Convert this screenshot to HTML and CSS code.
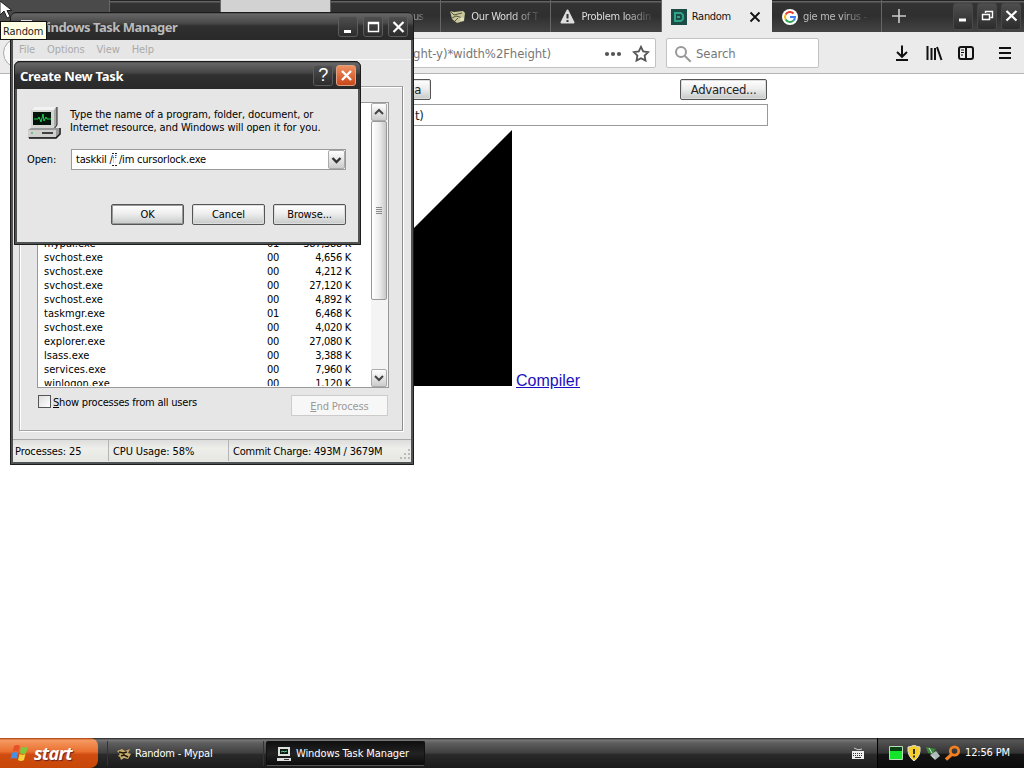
FILE: index.html
```html
<!DOCTYPE html>
<html lang="en">
<head>
    <meta charset="UTF-8">
    <meta name="viewport" content="width=device-width, initial-scale=1.0">
    <title>Random - Mypal</title>
    <link rel="stylesheet" href="styles.css">
</head>
<body>

    <!-- browser -->
    <div class="browser">
        <div class="tabs">
            <div class="tab first"></div>
            <div class="tab"></div>
            <div class="tab light"></div>
            <div class="tab fade right"><span>us</span></div>
            <div class="tab fade">
                <svg width="18" height="18" viewBox="0 0 18 18"><path d="M1 3l4 1 9-1 2 2-1 8-7 2-5-4z" fill="#c9c79a"/><path d="M1 3l4 4 8-2M3 10l4-2 7 2M6 13l3-3" stroke="#55553c" fill="none"/><circle cx="13" cy="11" r="2" fill="#e4e2b8"/></svg>
                <span>Our World of T</span>
            </div>
            <div class="tab fade">
                <svg width="18" height="18" viewBox="0 0 18 18"><path d="M8.5 2.5l6 12h-12z" fill="#ddd" stroke="#ddd" stroke-width="2" stroke-linejoin="round"/><path d="M8.500 6v4.500M8.500 12v2" stroke="#333" stroke-width="2"/></svg>
                <span>Problem loadin</span>
            </div>
            <div class="tab active">
                <svg width="18" height="18" viewBox="0 0 18 18"><rect x="1" y="1" width="16" height="16" fill="#1c4a44"/><path d="M5 5h6l2 2v4l-2 2H5z" fill="none" stroke="#2fa187" stroke-width="2"/><path d="M7 8h3v2H7z" fill="#2fa187"/></svg>
                <span>Random</span>
                <svg class="close" width="12" height="12" viewBox="0 0 12 12"><path d="M1.500 1.500l9 9M10.500 1.500l-9 9" stroke="#111" stroke-width="1.800"/></svg>
            </div>
            <div class="tab fade google">
                <svg width="18" height="18" viewBox="0 0 18 18"><circle cx="9" cy="9" r="8" fill="#fff"/><g fill="none" stroke-width="2"><path d="M12.500 5.500A5 5 0 0 0 4.700 6.500" stroke="#e33b2e"/><path d="M4.700 6.500a5 5 0 0 0 0 5" stroke="#f5b912"/><path d="M4.700 11.500a5 5 0 0 0 7.500 1.300" stroke="#2fa44f"/><path d="M12.200 12.800A5 5 0 0 0 14 9H9" stroke="#4080ee"/></g></svg>
                <span>gie me virus -</span>
            </div>
            <div class="plus"><svg width="14" height="14" viewBox="0 0 14 14"><path d="M7 0v14M0 7h14" stroke="#ccc" stroke-width="1.600"/></svg></div>
            <div class="win-buttons">
                <b><svg width="19" height="25"><path d="M5 16h7" stroke="#fff" stroke-width="3"/></svg></b>
                <b><svg width="19" height="25"><path d="M7.500 9V7.500h7v6h-2M4.500 10.500h7v5h-7zM4 10.500h8" stroke="#fff" stroke-width="1.400" fill="none"/></svg></b>
                <b><svg width="19" height="25"><path d="M4.500 7l10 9.500M14.500 7l-10 9.500" stroke="#fff" stroke-width="2.200"/></svg></b>
            </div>
        </div>

        <div class="toolbar">
            <div class="back"></div>
            <div class="url">
                <span>ght-y)*width%2Fheight)</span>
                <svg class="dots" width="18" height="6" viewBox="0 0 18 6"><circle cx="3" cy="3" r="2.100"/><circle cx="9" cy="3" r="2.100"/><circle cx="15" cy="3" r="2.100"/></svg>
                <svg class="star" width="18" height="18" viewBox="0 0 18 18"><path d="M9 1.800l2.200 4.600 5 .7-3.600 3.500.9 5L9 13.200l-4.500 2.400.9-5L1.800 7.100l5-.7z"/></svg>
            </div>
            <div class="search">
                <svg width="18" height="18" viewBox="0 0 18 18"><circle cx="7" cy="7" r="5" /><path d="M10.700 10.700l6 6"/></svg>
                <span>Search</span>
            </div>
            <div class="tools">
                <svg width="18" height="18" viewBox="0 0 18 18"><path d="M9 1.500v11M4 8l5 4.800L14 8M3 16h12"/></svg>
                <svg width="18" height="18" viewBox="0 0 18 18"><path d="M2.500 2v14M6.500 4v12M10 4v12M12 3l4.500 13"/></svg>
                <svg width="18" height="18" viewBox="0 0 18 18"><rect x="2" y="3" width="14" height="12" rx="2"/><path d="M9 3v12" /><path d="M4 6h3M4 8.500h3M4 11h2" stroke-width="1"/></svg>
                <svg class="menu-icon" width="18" height="18" viewBox="0 0 18 18"><path d="M3 4h12M3 9h12M3 14h12"/></svg>
            </div>
        </div>

        <div class="page">
            <div class="buttons">
                <button class="short">a</button>
                <button class="advanced">Advanced...</button>
            </div>
            <div class="formula"><span>t)</span></div>
            <div class="output">
                <svg width="256" height="256"><path d="M256 0v256H0z"/></svg>
                <a href="#">Compiler</a>
            </div>
        </div>
    </div>

    <!-- task manager -->
    <div class="window manager">
        <div class="title">
            <svg width="16" height="16" viewBox="0 0 16 16"><path d="M3 1h11v9H3zM1 12h14v3H1z" fill="#ddd"/></svg>
            <span>Windows Task Manager</span>
            <div class="win-buttons">
                <b><svg width="19" height="20"><path d="M5 14.500h7" stroke="#fff" stroke-width="3"/></svg></b>
                <b><svg width="19" height="20"><path d="M4.500 5.500h10v9h-10zM4 6.500h11" stroke="#fff" stroke-width="1.400" fill="none"/></svg></b>
                <b><svg width="19" height="20"><path d="M4.500 5l10 10M14.500 5l-10 10" stroke="#fff" stroke-width="2.200"/></svg></b>
            </div>
        </div>
        <div class="menu"><span>File</span><span>Options</span><span>View</span><span>Help</span></div>
        <div class="panel">
            <div class="list">
                <div class="rows">
                    <table>
                        <tr><td>mypal.exe</td><td>01</td><td>387,388 K</td></tr>
                        <tr><td>svchost.exe</td><td>00</td><td>4,656 K</td></tr>
                        <tr><td>svchost.exe</td><td>00</td><td>4,212 K</td></tr>
                        <tr><td>svchost.exe</td><td>00</td><td>27,120 K</td></tr>
                        <tr><td>svchost.exe</td><td>00</td><td>4,892 K</td></tr>
                        <tr><td>taskmgr.exe</td><td>01</td><td>6,468 K</td></tr>
                        <tr><td>svchost.exe</td><td>00</td><td>4,020 K</td></tr>
                        <tr><td>explorer.exe</td><td>00</td><td>27,080 K</td></tr>
                        <tr><td>lsass.exe</td><td>00</td><td>3,388 K</td></tr>
                        <tr><td>services.exe</td><td>00</td><td>7,960 K</td></tr>
                        <tr><td>winlogon.exe</td><td>00</td><td>1,120 K</td></tr>
                    </table>
                </div>
                <div class="scroll">
                    <i class="arrow"><svg width="14" height="16"><path d="M3 10l4-4 4 4"/></svg></i>
                    <i class="thumb"></i>
                    <i class="arrow down"><svg width="14" height="16"><path d="M3 6l4 4 4-4"/></svg></i>
                </div>
            </div>
            <div class="below">
                <label><i class="box"></i><span><u>S</u>how processes from all users</span></label>
                <div class="end"><u>E</u>nd Process</div>
            </div>
        </div>
        <div class="status">
            <span>Processes: 25</span><span>CPU Usage: 58%</span><span>Commit Charge: 493M / 3679M</span>
            <svg width="12" height="12" viewBox="0 0 12 12"><path d="M9 1h2M5 5h2M9 5h2M1 9h2M5 9h2M9 9h2" stroke="#bbb" stroke-width="2"/></svg>
        </div>
    </div>

    <!-- run dialog -->
    <div class="window dialog">
        <div class="title">
            <span>Create New Task</span>
            <div class="win-buttons">
                <b>?</b>
                <b class="orange"><svg width="19" height="19"><path d="M5 5l9 9M14 5l-9 9" stroke="#fff" stroke-width="2.400"/></svg></b>
            </div>
        </div>
        <div class="content">
            <div class="info">
                <svg width="34" height="34" viewBox="0 0 34 34">
                    <path d="M4 4l3-3h23v18l-3 4H4z" fill="#aaa"/>
                    <path d="M30 1v18l-3 4H4" fill="none" stroke="#222"/>
                    <path d="M4 4l3-3h22l-2 3z" fill="#f2f2f2"/>
                    <path d="M4 4h23v18H4z" fill="#d4d4d0"/>
                    <path d="M6 6h18v13H6z" fill="#03150a"/>
                    <path d="M7 13h4l1-2 2 5 2-8 1 7 2-4 1 2h4" stroke="#20d050" fill="none"/>
                    <path d="M1 24l3-2h28v6l-3 4H1z" fill="#999"/>
                    <path d="M1 24h28v7H1z" fill="#cfd0cd"/>
                    <path d="M15 27h11M2 32h27l4-4v-6" stroke="#111" stroke-width="1.500" fill="none"/><path d="M4 27h2" stroke="#2a5"/>
                </svg>
                <p><span>Type the name of a program, folder, document, or</span><br><span>Internet resource, and Windows will open it for you.</span></p>
            </div>
            <div class="open">
                <span>Open:</span>
                <div class="combo">
                    <span>taskkil /f /im cursorlock.exe</span>
                    <i><svg width="15" height="18"><path d="M3.500 7l4 4 4-4" stroke="#333" stroke-width="2.400" fill="none"/></svg></i>
                    <svg class="ibeam" width="7" height="16" viewBox="0 0 7 16"><path d="M3.500 3v10" stroke="#fff" stroke-width="1.200"/><path d="M1 2.500h2M4 2.500h2M1 14.500h2M4 14.500h2" stroke="#222"/></svg>
                </div>
            </div>
            <div class="actions">
                <button class="default">OK</button>
                <button>Cancel</button>
                <button>Browse...</button>
            </div>
        </div>
    </div>

    <!-- tooltip and cursor -->
    <div class="tooltip">Random</div>
    <svg class="cursor" width="13" height="20" viewBox="0 0 13 20"><path d="M0 0v14l4-4 3 7 3-1.500-3-6h5z" fill="#fff" stroke="#222"/></svg>

    <!-- taskbar -->
    <div class="taskbar">
        <div class="start">
            <svg width="20" height="20" viewBox="0 0 20 20"><path d="M4 3q3-2 6 0L8.500 9q-3-2-6 0z" fill="#e8502a"/><path d="M11 3.500q3 2 7 0L16 10q-3 2-6 0z" fill="#7ec83e"/><path d="M2 10q3-2 6 0l-1.500 6q-3-2-6 0z" fill="#4b8fe0"/><path d="M9.500 10.800q3 2 6 0L14 17q-3 2-6 0z" fill="#f8cf3a"/></svg>
            <span>start</span>
        </div>
        <div class="task">
            <svg width="16" height="16" viewBox="0 0 16 16"><path d="M1 5l5-2 3 2 5-2-2 4 3 1-3 5-4-1-3 2-1-3-2-1 2-2z" fill="#c8ac6c"/><path d="M3 6l4 1 4-1M5 10l3-1 4 2M8 7v3" stroke="#221a0e" stroke-width="1.500" fill="none"/></svg>
            <span>Random - Mypal</span>
        </div>
        <div class="task pressed">
            <svg width="16" height="16" viewBox="0 0 16 16"><path d="M2 1h12v9H2zM1 12h14v3H1z" fill="#dde0dc"/><path d="M4 3h8v5H4z" fill="#0a1a10"/><path d="M5 6l2-1 1 1 3-1" stroke="#6c9" fill="none"/><path d="M8 13.500h5" stroke="#333"/></svg>
            <span>Windows Task Manager</span>
        </div>
        <div class="keyboard"><svg width="14" height="14" viewBox="0 0 14 14"><path d="M3 1q4 3 8 1" stroke="#ccc" fill="none"/><path d="M1 4h12v8H1z" fill="#eee"/><path d="M2 6.500h10M2 8.500h10" stroke="#333" stroke-dasharray="1 1"/><path d="M4 10.500h6" stroke="#333"/></svg></div>
        <div class="tray">
            <svg width="14" height="14" viewBox="0 0 14 14"><path d="M1 1h12v12H1z" fill="#14e52a"/><path d="M1 1h12v4H1z" fill="#0a4214"/><path d="M.5 .5h13v13H.5z" fill="none" stroke="#b9e0b9"/></svg>
            <svg width="14" height="16" viewBox="0 0 14 16"><path d="M7 0q3 2 6 2 1 9-6 14Q0 11 1 2q3 0 6-2z" fill="#f6cf2a" stroke="#ddd"/><path d="M7 4v5M7 10.500v2" stroke="#222" stroke-width="1.800"/></svg>
            <svg width="16" height="16" viewBox="0 0 16 16"><path d="M1 2l10 2-4 5-4-1z" fill="#3a8a3a"/><path d="M5 10l6-4 4 5-5 4z" fill="#aebbb8"/><path d="M7 11l3 2M4 3l3 5" stroke="#dde" fill="none"/></svg>
            <svg width="16" height="16" viewBox="0 0 16 16"><circle cx="9.500" cy="6" r="4.200" fill="none" stroke="#f08020" stroke-width="2.800"/><path d="M6.500 9.500L1 14.500" stroke="#f08020" stroke-width="3.200"/></svg>
            <span>12:56 PM</span>
        </div>
    </div>

</body>
</html>
```

FILE: styles.css
```css
* {
    box-sizing: border-box;
}

body {
    margin: 0;
    width: 1024px;
    height: 768px;
    overflow: hidden;
    display: flex;
    flex-direction: column;
    background: #fff;
    font: 11px/14px "DejaVu Sans Condensed", "DejaVu Sans", sans-serif;
    letter-spacing: -0.1px;
    color: #000;
}

svg {
    display: block;
    flex: none;
}

i {
    font-style: normal;
}

span {
    white-space: nowrap;
}

/* browser */
.browser {
    flex: 1;
    letter-spacing: -0.3px;
}

.tabs {
    display: flex;
    height: 32px;
    background: linear-gradient(#242424 0, #242424 1px, #636363 1px, #636363 2px, #333 3px, #2f2f2f 50%, #444);
    color: #ddd;
}

.tab {
    display: flex;
    align-items: center;
    width: 110.300px;
    padding: 2px 0 0 8px;
    border-right: 1px solid #666;
    overflow: hidden;
}

.tab span {
    margin-left: 4px;
}

.first {
    background: #4a4a4a;
}

.light {
    background: #d2d2d2;
}

.fade span {
    -webkit-mask-image: linear-gradient(to right, #000 60%, rgba(0, 0, 0, 0.15));
    mask-image: linear-gradient(to right, #000 60%, rgba(0, 0, 0, 0.15));
}

.tab.right span {
    margin-left: 74px;
    color: #999;
}

.active {
    background: #ebebeb;
    color: #111;
    border: none;
}

.close {
    margin-left: auto;
    margin-right: 11px;
}

.google {
    padding-left: 9px;
    color: #bbb;
}

.plus {
    padding: 9px 0 0 10px;
}

.win-buttons {
    display: flex;
    gap: 4px;
    margin-left: auto;
}

.win-buttons b {
    width: 20px;
    height: 21px;
    border: 1px solid #5c5c5c;
    border-radius: 3px;
    background: linear-gradient(#4e4e4e, #2c2c2c);
}

.tabs .win-buttons {
    padding: 3px 3px 0 0;
}

.tabs .win-buttons b {
    height: 27px;
    border-color: #484848;
}

.toolbar {
    display: flex;
    height: 42px;
    padding: 6px 0 0 3px;
    background: #ebebeb;
    border-bottom: 1px solid #b5b5b5;
    font-size: 13px;
    letter-spacing: -0.4px;
    color: #777;
}

.back {
    width: 30px;
    height: 30px;
    border: 1px solid #aaa;
    border-radius: 50%;
    background: #fafafa;
}

.url,
.search {
    display: flex;
    align-items: center;
    height: 30px;
    padding-top: 1px;
    background: #fff;
    border: 1px solid #c2c2c2;
    border-radius: 2px;
}

.url {
    width: 616px;
    margin-left: 7px;
    padding-right: 5px;
    justify-content: flex-end;
    letter-spacing: -0.1px;
}

.dots {
    margin: 0 10px 0 53px;
    fill: #555;
}

.star {
    fill: none;
    stroke: #555;
    stroke-width: 1.800;
}

.search {
    width: 153px;
    margin-left: 10px;
    padding-left: 7px;
    letter-spacing: -0.1px;
}

.search svg {
    fill: none;
    stroke: #999;
    stroke-width: 2;
    margin-right: 4px;
}

.tools {
    display: flex;
    margin-left: auto;
    padding: 6px 10px 0 0;
    gap: 14px;
}

.tools svg {
    fill: none;
    stroke: #111;
    stroke-width: 2;
}

.tools .menu-icon {
    margin-left: 7px;
}

.page {
    width: 512px;
    margin-left: 256px;
    padding-top: 5px;
}

button {
    font: inherit;
    letter-spacing: inherit;
    color: #000;
    padding: 0;
    width: 73px;
    height: 21px;
    border: 1px solid #555;
    border-radius: 2px;
    background: linear-gradient(#fff, #eee 45%, #c6c9c9);
    box-shadow: inset 0 0 0 1px #ddd;
}

.page .buttons {
    display: flex;
    justify-content: space-between;
    font-size: 13px;
}

.page button,
.formula {
    color: #222;
}

.page .short {
    width: 175px;
    text-align: right;
    padding-right: 9px;
}

.page .advanced {
    width: 87px;
    margin-right: 1px;
}

.formula {
    height: 22px;
    margin: 4px 0;
    padding: 4px 0 0 158px;
    border: 1px solid #999;
    font-size: 13px;
}

.output {
    display: flex;
    align-items: flex-end;
    gap: 4px;
    margin-right: -100px;
    font: 16px/18px "Liberation Sans", Arial, sans-serif;
    letter-spacing: 0;
}

.output a {
    margin-bottom: -4px;
    color: #1a10c0;
}

/* windows */
.window {
    position: absolute;
    background: #e6e6e6;
    border: 3px solid #505353;
    border-top: none;
    outline: 1px solid #1c1c1c;
    outline-offset: -1px;
    border-radius: 6px 6px 0 0;
}

.title {
    display: flex;
    align-items: center;
    margin: 0 -3px;
    background: linear-gradient(#1c1c1c 0, #666 2px, #484848 40%, #303030 50%, #292929);
    border-radius: 6px 6px 0 0;
    color: #fff;
    font: bold 13px/16px "Noto Sans", "Open Sans", sans-serif;
    letter-spacing: -0.3px;
}

.manager {
    left: 10px;
    top: 12px;
    width: 404px;
    height: 453px;
}

.manager .title {
    height: 28px;
    padding: 1px 7px 0 8px;
    color: #bbb;
    letter-spacing: -0.5px;
}

.manager .title span {
    margin-left: 1px;
}

.manager .win-buttons {
    gap: 5px;
    margin-right: -1px;
}

.menu {
    display: flex;
    gap: 12px;
    height: 20px;
    padding: 3px 0 0 6px;
    color: #aaa;
    border-bottom: 1px solid #f8f8f8;
}

.panel {
    display: flex;
    flex-direction: column;
    width: 384px;
    height: 345px;
    margin: 26px 0 0 6px;
    padding: 15px 14px 0 17px;
    border: 1px solid #a5a5a5;
    border-right-color: #8e8e8e;
    box-shadow: 1px 1px 0 #fff, inset 1px 1px 0 #fff;
}

.list {
    display: flex;
    height: 286px;
    width: 352px;
    border: 1px solid #999;
    background: #fff;
}

.rows {
    flex: 1;
    height: 283px;
    overflow: hidden;
    display: flex;
    align-items: flex-end;
}

table {
    width: 314px;
    margin-bottom: -5px;
    margin-left: 6px;
    border-collapse: collapse;
    letter-spacing: -0.3px;
}

td {
    padding: 0;
    height: 14px;
    line-height: 14px;
    text-align: right;
}

td:first-child {
    width: 180px;
    text-align: left;
    letter-spacing: 0.05px;
}

td:nth-child(2) {
    width: 55px;
}

td:last-child {
    padding-right: 7px;
}

.scroll {
    display: flex;
    flex-direction: column;
    width: 17px;
    background: #f4f4f4;
}

.arrow {
    width: 16px;
    height: 18px;
    border: 1px solid #aaa;
    border-radius: 2px;
    background: linear-gradient(#fff, #ccc);
}

.arrow path {
    fill: none;
    stroke: #444;
    stroke-width: 2;
}

.thumb {
    width: 16px;
    height: 179px;
    border: 1px solid #999;
    border-radius: 2px;
    background: repeating-linear-gradient(#888 0, #888 1px, transparent 1px, transparent 2px) center / 6px 7px no-repeat, linear-gradient(to right, #fff, #eee 50%, #c8c8c8);
}

.down {
    margin-top: auto;
}

.below {
    display: flex;
    justify-content: space-between;
    padding-top: 7px;
}

label {
    display: flex;
    gap: 2px;
    line-height: 16px;
    letter-spacing: -0.2px;
}

.box {
    width: 13px;
    height: 13px;
    margin-left: 1px;
    border: 1px solid #555;
    background: linear-gradient(135deg, #ddd, #fff);
}

.end {
    width: 97px;
    height: 21px;
    border: 1px solid #ccc;
    background: #f7f7f7;
    color: #999;
    text-align: center;
    line-height: 21px;
}

.status {
    display: flex;
    height: 22px;
    margin-top: 8px;
    padding-left: 2px;
    border-top: 1px solid #aaa;
    background: linear-gradient(#ddd, #eeeeea 40%, #e6e6e2);
    line-height: 23px;
}

.status span {
    width: 93px;
}

.status span + span {
    width: 120px;
    padding-left: 4px;
    border-left: 1px solid #b5b5b5;
}

.status span:nth-child(3) {
    width: 171px;
    letter-spacing: -0.2px;
}

.status svg {
    margin-top: 9px;
}

.dialog {
    left: 14px;
    top: 61px;
    width: 347px;
    height: 184px;
}

.dialog .title {
    height: 28px;
    padding: 1px 5px 0 6px;
}

.dialog .win-buttons {
    gap: 3px;
}

.dialog b {
    font: 18px/19px "Liberation Sans", sans-serif;
    text-align: center;
}

.dialog .orange {
    border-color: #dca084;
    background: linear-gradient(#f09060, #c8481a);
}

.content {
    padding: 17px 12px 0 10px;
}

.info {
    display: flex;
    height: 43px;
}

.info p {
    margin: 2px 0 0 9px;
    line-height: 13px;
}

.open {
    display: flex;
    align-items: center;
}

.combo {
    position: relative;
    display: flex;
    align-items: center;
    justify-content: space-between;
    width: 275px;
    height: 21px;
    margin-left: auto;
    padding-left: 4px;
    background: #fff;
    border: 1px solid #999;
    letter-spacing: -0.2px;
}

.combo i {
    height: 19px;
    border: 1px solid #aaa;
    border-radius: 2px;
    background: linear-gradient(#fff, #ccc);
}

/* mouse pointer over the text */
.ibeam {
    position: absolute;
    left: 39px;
    top: 1px;
}

.actions {
    display: flex;
    justify-content: flex-end;
    gap: 8px;
    padding-top: 34px;
}

.default {
    box-shadow: inset 0 0 0 1px #999;
}

/* tooltip, cursor */
.tooltip {
    position: absolute;
    left: 0;
    top: 21px;
    width: 47px;
    height: 19px;
    padding: 3px 0 0 2px;
    background: #ffffe4;
    border: 1px solid #111;
    color: #222;
}

.cursor {
    position: absolute;
    left: 0;
    top: 1px;
}

/* taskbar */
.taskbar {
    display: flex;
    height: 30px;
    background: linear-gradient(#222 0, #777 2px, #5e5e5e 5px, #3f3f3f 50%, #2a2a2a 55%, #1b1b1b);
    color: #fff;
}

.start {
    display: flex;
    align-items: center;
    width: 98px;
    padding-left: 10px;
    border-radius: 0 8px 8px 0;
    background: linear-gradient(#a03808 0, #f59a62 2px, #ea7030 45%, #d04c10 55%, #c64808);
    font: italic bold 18px/20px "Open Sans", sans-serif;
    letter-spacing: -0.7px;
    text-shadow: 1px 1px 1px #622;
}

.start span {
    margin-left: 4px;
}

.task {
    display: flex;
    align-items: center;
    width: 157px;
    margin: 3px 0 2px 9px;
    padding-left: 8px;
    border-left: 1px solid #333;
    border-right: 1px solid #333;
    letter-spacing: -0.2px;
}

.task span {
    margin-left: 3px;
}

.pressed {
    width: 159px;
    margin-left: 2px;
    padding-left: 9px;
    border: 1px solid #111;
    border-bottom-color: #555;
    border-radius: 2px;
    background: linear-gradient(#101010, #222 50%, #0c0c0c);
    letter-spacing: -0.1px;
}

.pressed span {
    margin-left: 4px;
}

.keyboard {
    margin: 9px 12px 0 auto;
}

.tray {
    display: flex;
    align-items: center;
    width: 147px;
    padding-left: 11px;
    gap: 4px;
    border-left: 1px solid #000;
    background: linear-gradient(#222 0, #555 2px, #333 50%, #141414 55%, #0b0b0b);
}

.tray span {
    letter-spacing: -0.15px;
}
```
